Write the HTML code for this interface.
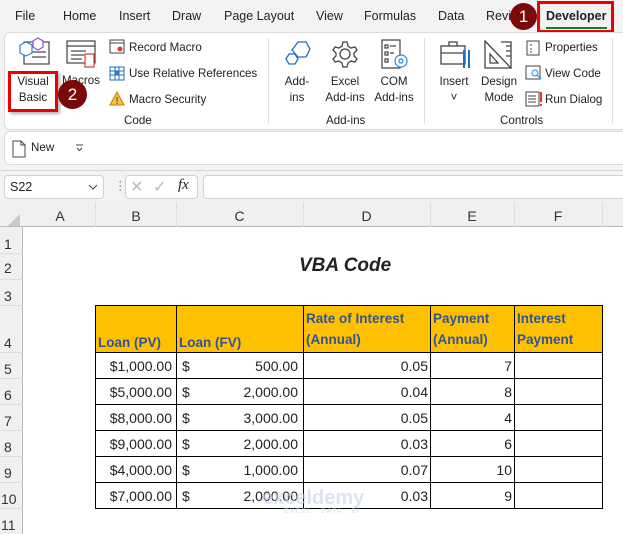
<!DOCTYPE html>
<html><head><meta charset="utf-8"><style>
*{margin:0;padding:0;box-sizing:border-box}
body{width:623px;height:534px;overflow:hidden;background:#f3f3f3;font-family:"Liberation Sans",sans-serif;font-size:12.5px;color:#222;position:relative}
.a{position:absolute;white-space:nowrap}
.c{text-align:center}
.r{font-size:11.6px}
.grid{position:absolute;left:0;top:200px;width:623px;height:334px;background:#fff}
</style></head><body>
<!-- tabs -->
<div class="a" style="left:15px;top:9px">File</div>
<div class="a" style="left:63px;top:9px">Home</div>
<div class="a" style="left:119px;top:9px">Insert</div>
<div class="a" style="left:172px;top:9px">Draw</div>
<div class="a" style="left:224px;top:9px">Page Layout</div>
<div class="a" style="left:316px;top:9px">View</div>
<div class="a" style="left:364px;top:9px">Formulas</div>
<div class="a" style="left:438px;top:9px">Data</div>
<div class="a" style="left:486px;top:9px">Revi</div>
<div class="a" style="left:546px;top:9px;font-weight:bold;color:#222">Developer</div>
<div class="a" style="left:546px;top:27px;width:61px;height:2px;background:#107c41"></div>
<div class="a" style="left:537px;top:1px;width:77px;height:32px;border:3px solid #e00"></div>
<div class="a c" style="left:510px;top:3px;width:27px;height:27px;border-radius:50%;background:#7a0a0a;color:#fff;font-size:17px;line-height:27px">1</div>
<!-- ribbon panel -->
<div class="a" style="left:4px;top:32px;width:630px;height:98px;background:#fff;border:1px solid #dcdcdc;border-radius:6px"></div>
<div class="a" style="left:268px;top:38px;width:1px;height:86px;background:#ddd"></div>
<div class="a" style="left:424px;top:38px;width:1px;height:86px;background:#ddd"></div>
<div class="a" style="left:612px;top:38px;width:1px;height:86px;background:#ddd"></div>
<!-- icons -->
<svg class="a" style="left:18px;top:36px" width="34" height="30" viewBox="0 0 34 30" fill="none" stroke-width="1.2">
<rect x="6" y="6" width="25" height="22" stroke="#444"/><line x1="14" y1="16" x2="28" y2="16" stroke="#444"/><line x1="14" y1="21" x2="28" y2="21" stroke="#444"/>
<path d="M2 9l6-3 6 3v8l-6 3-6-3z" stroke="#1e88e5" fill="#fff"/><path d="M15 5l5-3 5 3v6l-5 3-5-3z" stroke="#9c4dcc" fill="#fff"/></svg>
<svg class="a" style="left:66px;top:40px" width="32" height="30" viewBox="0 0 32 30" fill="none" stroke="#444" stroke-width="1.2">
<rect x="1" y="1" width="28" height="22"/><line x1="1" y1="6" x2="29" y2="6"/><line x1="5" y1="11" x2="20" y2="11"/><line x1="5" y1="15" x2="18" y2="15"/><line x1="5" y1="19" x2="16" y2="19"/>
<path d="M19 14h9v13h-9z" stroke="#e53935" fill="#fff"/></svg>
<svg class="a" style="left:109px;top:39px" width="16" height="16" viewBox="0 0 16 16" fill="none" stroke="#444"><rect x="1" y="1" width="14" height="13"/><line x1="1" y1="4" x2="15" y2="4"/><circle cx="11" cy="10" r="3" fill="#e53935" stroke="#fff"/></svg>
<svg class="a" style="left:109px;top:66px" width="16" height="15" viewBox="0 0 16 15" stroke="#1e6fc0"><rect x="1" y="1" width="14" height="13" fill="#fff"/><rect x="6" y="5" width="4" height="4" fill="#1e88e5"/><path d="M1 5h14M1 9h14M6 1v13M10 1v13" fill="none"/></svg>
<svg class="a" style="left:109px;top:91px" width="16" height="15" viewBox="0 0 16 15"><path d="M8 1L15 14H1z" fill="#f7c04a" stroke="#c77b00"/><text x="8" y="13" font-size="10" text-anchor="middle" fill="#333" font-family="Liberation Sans">!</text></svg>
<svg class="a" style="left:283px;top:40px" width="30" height="30" viewBox="0 0 30 30" fill="none" stroke="#1e6fc0" stroke-width="1.3"><path d="M9 10l6-8h8l4 7-4 8h-8z"/><path d="M3 19l3-5h6l3 5-3 5H6z"/></svg>
<svg class="a" style="left:330px;top:39px" width="30" height="30" viewBox="0 0 30 30" fill="none" stroke="#444" stroke-width="1.3"><circle cx="15" cy="15" r="5"/><path d="M13 3h4l1 4 3 2 4-1 2 3-3 3v3l3 3-2 3-4-1-3 2-1 4h-4l-1-4-3-2-4 1-2-3 3-3v-3l-3-3 2-3 4 1 3-2z"/></svg>
<svg class="a" style="left:380px;top:39px" width="30" height="32" viewBox="0 0 30 32" fill="none" stroke-width="1.2"><path d="M2 1h18v28H2z" stroke="#444"/><path d="M5 6h3v3H5zM5 13h3v3H5zM5 20h3v3H5zM10 7h6M10 14h4" stroke="#444"/><circle cx="21" cy="22" r="6" stroke="#1e88e5" fill="#fff"/><circle cx="21" cy="22" r="2" stroke="#1e88e5"/></svg>
<svg class="a" style="left:440px;top:40px" width="32" height="30" viewBox="0 0 32 30" fill="none" stroke="#444" stroke-width="1.3"><rect x="1" y="6" width="24" height="18"/><path d="M9 6V2h8v4M1 13h24"/><path d="M24 10v18M29 10v18" stroke="#1e6fc0" stroke-width="2"/></svg>
<svg class="a" style="left:484px;top:40px" width="30" height="30" viewBox="0 0 30 30" fill="none" stroke="#444" stroke-width="1.3"><path d="M1 1l26 27H1z"/><path d="M6 14l8 9H6z"/><path d="M17 2h10v26"/><path d="M22 6h5M22 11h5M22 16h5"/></svg>
<svg class="a" style="left:526px;top:40px" width="14" height="16" viewBox="0 0 14 16" fill="none" stroke="#444"><rect x="1" y="1" width="12" height="14"/><path d="M4 5h2M4 9h2M4 12h2"/></svg>
<svg class="a" style="left:525px;top:65px" width="17" height="16" viewBox="0 0 17 16" fill="none" stroke="#444"><rect x="1" y="1" width="14" height="13"/><circle cx="10" cy="8" r="3" stroke="#1e88e5"/><path d="M12 10l4 4" stroke="#1e88e5"/></svg>
<svg class="a" style="left:525px;top:91px" width="17" height="16" viewBox="0 0 17 16" fill="none" stroke="#444"><rect x="1" y="1" width="13" height="14"/><path d="M3 5h8M3 8h8M3 11h8"/><path d="M16 1v10M16 13v2" stroke="#e53935" stroke-width="2"/></svg>
<!-- ribbon text -->
<div class="a c r" style="left:8px;top:74px;width:50px;line-height:16px">Visual<br>Basic</div>
<div class="a r" style="left:62px;top:74px">Macros</div>
<div class="a" style="left:8px;top:71px;width:50px;height:41px;border:3px solid #e00;box-shadow:2px 2px 3px rgba(0,0,0,.3)"></div>
<div class="a c" style="left:58px;top:80px;width:29px;height:29px;border-radius:50%;background:#7a0a0a;color:#fff;font-size:17px;line-height:29px">2</div>
<div class="a r" style="left:129px;top:41px">Record Macro</div>
<div class="a r" style="left:129px;top:67px">Use Relative References</div>
<div class="a r" style="left:129px;top:93px">Macro Security</div>
<div class="a r" style="left:124px;top:114px">Code</div>
<div class="a c r" style="left:278px;top:74px;width:38px;line-height:16px">Add-<br>ins</div>
<div class="a c r" style="left:320px;top:74px;width:50px;line-height:16px">Excel<br>Add-ins</div>
<div class="a c r" style="left:369px;top:74px;width:50px;line-height:16px">COM<br>Add-ins</div>
<div class="a r" style="left:326px;top:114px">Add-ins</div>
<div class="a c r" style="left:434px;top:74px;width:40px;line-height:16px">Insert<br>˅</div>
<div class="a c r" style="left:478px;top:74px;width:42px;line-height:16px">Design<br>Mode</div>
<div class="a r" style="left:545px;top:41px">Properties</div>
<div class="a r" style="left:545px;top:67px">View Code</div>
<div class="a r" style="left:545px;top:93px">Run Dialog</div>
<div class="a r" style="left:500px;top:114px">Controls</div>
<!-- command bar -->
<div class="a" style="left:4px;top:131px;width:630px;height:34px;background:#fff;border:1px solid #dcdcdc;border-radius:6px"></div>
<svg class="a" style="left:12px;top:140px" width="14" height="18" viewBox="0 0 14 18" fill="none" stroke="#444"><path d="M1 1h8l4 4v12H1z M9 1v4h4"/></svg>
<div class="a r" style="left:31px;top:141px">New</div>
<svg class="a" style="left:75px;top:144px" width="9" height="8" viewBox="0 0 9 8" fill="none" stroke="#444"><path d="M1 1h7M2 4l2.5 2.5L7 4"/></svg>
<!-- formula bar -->
<div class="a" style="left:0;top:170px;width:623px;height:1px;background:#d6d6d6"></div>
<div class="a" style="left:4px;top:175px;width:100px;height:24px;background:#fff;border:1px solid #d0d0d0;border-radius:4px"></div>
<div class="a" style="left:10px;top:180px">S22</div>
<svg class="a" style="left:88px;top:184px" width="10" height="6" viewBox="0 0 10 6" fill="none" stroke="#444"><path d="M1 1l4 4 4-4"/></svg>
<div class="a" style="left:114px;top:178px;color:#888">⋮</div>
<div class="a" style="left:125px;top:175px;width:73px;height:24px;background:#fff;border:1px solid #d0d0d0;border-radius:4px"></div>
<div class="a" style="left:130px;top:177px;color:#bbb;font-size:16px">✕</div>
<div class="a" style="left:153px;top:177px;color:#bbb;font-size:16px">✓</div>
<div class="a" style="left:178px;top:177px;font-family:'Liberation Serif',serif;font-style:italic;font-size:15px">fx</div>
<div class="a" style="left:203px;top:175px;width:425px;height:24px;background:#fff;border:1px solid #d0d0d0;border-radius:4px"></div>
<!-- grid -->
<div class="grid"></div>
<div class="a" style="left:0;top:200px;width:623px;height:27px;background:#f0f0f0;border-bottom:1px solid #bbb"></div>
<div class="a" style="left:0;top:227px;width:23px;height:307px;background:#f0f0f0;border-right:1px solid #bbb"></div>
<svg class="a" style="left:8px;top:214px" width="12" height="12"><path d="M12 0V12H0z" fill="#c8c8c8"/></svg>
<div class="a c" style="left:24px;top:208px;width:72px;font-size:14px;color:#333">A</div>
<div class="a c" style="left:96px;top:208px;width:80px;font-size:14px;color:#333">B</div>
<div class="a c" style="left:176px;top:208px;width:127px;font-size:14px;color:#333">C</div>
<div class="a c" style="left:303px;top:208px;width:127px;font-size:14px;color:#333">D</div>
<div class="a c" style="left:430px;top:208px;width:84px;font-size:14px;color:#333">E</div>
<div class="a c" style="left:514px;top:208px;width:88px;font-size:14px;color:#333">F</div>
<div class="a" style="left:95px;top:202px;width:1px;height:25px;background:#ddd"></div>
<div class="a" style="left:176px;top:202px;width:1px;height:25px;background:#ddd"></div>
<div class="a" style="left:303px;top:202px;width:1px;height:25px;background:#ddd"></div>
<div class="a" style="left:430px;top:202px;width:1px;height:25px;background:#ddd"></div>
<div class="a" style="left:514px;top:202px;width:1px;height:25px;background:#ddd"></div>
<div class="a" style="left:602px;top:202px;width:1px;height:25px;background:#ddd"></div>
<!-- row numbers -->
<div class="a" style="left:4px;top:236px;font-size:14px;color:#333">1</div>
<div class="a" style="left:4px;top:260px;font-size:14px;color:#333">2</div>
<div class="a" style="left:4px;top:288px;font-size:14px;color:#333">3</div>
<div class="a" style="left:4px;top:335px;font-size:14px;color:#333">4</div>
<div class="a" style="left:4px;top:361px;font-size:14px;color:#333">5</div>
<div class="a" style="left:4px;top:387px;font-size:14px;color:#333">6</div>
<div class="a" style="left:4px;top:413px;font-size:14px;color:#333">7</div>
<div class="a" style="left:4px;top:439px;font-size:14px;color:#333">8</div>
<div class="a" style="left:4px;top:465px;font-size:14px;color:#333">9</div>
<div class="a" style="left:1px;top:491px;font-size:14px;color:#333">10</div>
<div class="a" style="left:1px;top:517px;font-size:14px;color:#333">11</div>
<div class="a" style="left:0;top:253px;width:23px;height:1px;background:#ddd"></div>
<div class="a" style="left:0;top:279px;width:23px;height:1px;background:#ddd"></div>
<div class="a" style="left:0;top:305px;width:23px;height:1px;background:#ddd"></div>
<div class="a" style="left:0;top:352px;width:23px;height:1px;background:#ddd"></div>
<div class="a" style="left:0;top:378px;width:23px;height:1px;background:#ddd"></div>
<div class="a" style="left:0;top:404px;width:23px;height:1px;background:#ddd"></div>
<div class="a" style="left:0;top:430px;width:23px;height:1px;background:#ddd"></div>
<div class="a" style="left:0;top:456px;width:23px;height:1px;background:#ddd"></div>
<div class="a" style="left:0;top:482px;width:23px;height:1px;background:#ddd"></div>
<div class="a" style="left:0;top:508px;width:23px;height:1px;background:#ddd"></div>
<!-- title -->
<div class="a" style="left:299px;top:255px;font-size:19px;font-weight:bold;font-style:italic">VBA Code</div>
<!-- table -->
<table class="a" style="left:95px;top:305px;border-collapse:collapse;font-size:14px;font-family:'Liberation Sans',sans-serif">
<tr style="height:47px;background:#ffc000;color:#2f5597;font-weight:bold;font-size:13.5px;vertical-align:bottom">
<td style="width:81px;border:1px solid #000;padding:0 2px 2px">Loan (PV)</td>
<td style="width:127px;border:1px solid #000;padding:0 2px 2px">Loan (FV)</td>
<td style="width:127px;border:1px solid #000;padding:0 2px 2px;line-height:21px">Rate of Interest<br>(Annual)</td>
<td style="width:84px;border:1px solid #000;padding:0 2px 2px;line-height:21px">Payment<br>(Annual)</td>
<td style="width:88px;border:1px solid #000;padding:0 2px 2px;line-height:21px">Interest<br>Payment</td></tr>
<tr style="height:26px"><td style="border:1px solid #000;padding:0 4px;text-align:right">$1,000.00</td><td style="border:1px solid #000;padding:0 5px"><span style="float:left">$</span><span style="float:right">500.00</span></td><td style="border:1px solid #000;padding:0 2px;text-align:right">0.05</td><td style="border:1px solid #000;padding:0 2px;text-align:right">7</td><td style="border:1px solid #000"></td></tr>
<tr style="height:26px"><td style="border:1px solid #000;padding:0 4px;text-align:right">$5,000.00</td><td style="border:1px solid #000;padding:0 5px"><span style="float:left">$</span><span style="float:right">2,000.00</span></td><td style="border:1px solid #000;padding:0 2px;text-align:right">0.04</td><td style="border:1px solid #000;padding:0 2px;text-align:right">8</td><td style="border:1px solid #000"></td></tr>
<tr style="height:26px"><td style="border:1px solid #000;padding:0 4px;text-align:right">$8,000.00</td><td style="border:1px solid #000;padding:0 5px"><span style="float:left">$</span><span style="float:right">3,000.00</span></td><td style="border:1px solid #000;padding:0 2px;text-align:right">0.05</td><td style="border:1px solid #000;padding:0 2px;text-align:right">4</td><td style="border:1px solid #000"></td></tr>
<tr style="height:26px"><td style="border:1px solid #000;padding:0 4px;text-align:right">$9,000.00</td><td style="border:1px solid #000;padding:0 5px"><span style="float:left">$</span><span style="float:right">2,000.00</span></td><td style="border:1px solid #000;padding:0 2px;text-align:right">0.03</td><td style="border:1px solid #000;padding:0 2px;text-align:right">6</td><td style="border:1px solid #000"></td></tr>
<tr style="height:26px"><td style="border:1px solid #000;padding:0 4px;text-align:right">$4,000.00</td><td style="border:1px solid #000;padding:0 5px"><span style="float:left">$</span><span style="float:right">1,000.00</span></td><td style="border:1px solid #000;padding:0 2px;text-align:right">0.07</td><td style="border:1px solid #000;padding:0 2px;text-align:right">10</td><td style="border:1px solid #000"></td></tr>
<tr style="height:26px"><td style="border:1px solid #000;padding:0 4px;text-align:right">$7,000.00</td><td style="border:1px solid #000;padding:0 5px"><span style="float:left">$</span><span style="float:right">2,000.00</span></td><td style="border:1px solid #000;padding:0 2px;text-align:right">0.03</td><td style="border:1px solid #000;padding:0 2px;text-align:right">9</td><td style="border:1px solid #000"></td></tr>
</table>
<div class="a" style="left:262px;top:487px;font-size:20px;font-weight:bold;color:#c5d3e8;opacity:.6">exceldemy</div>
<div class="a" style="left:284px;top:508px;font-size:7px;color:#c5d3e8;letter-spacing:1px;opacity:.7">EXCEL · DATA · BI</div>
</body></html>
